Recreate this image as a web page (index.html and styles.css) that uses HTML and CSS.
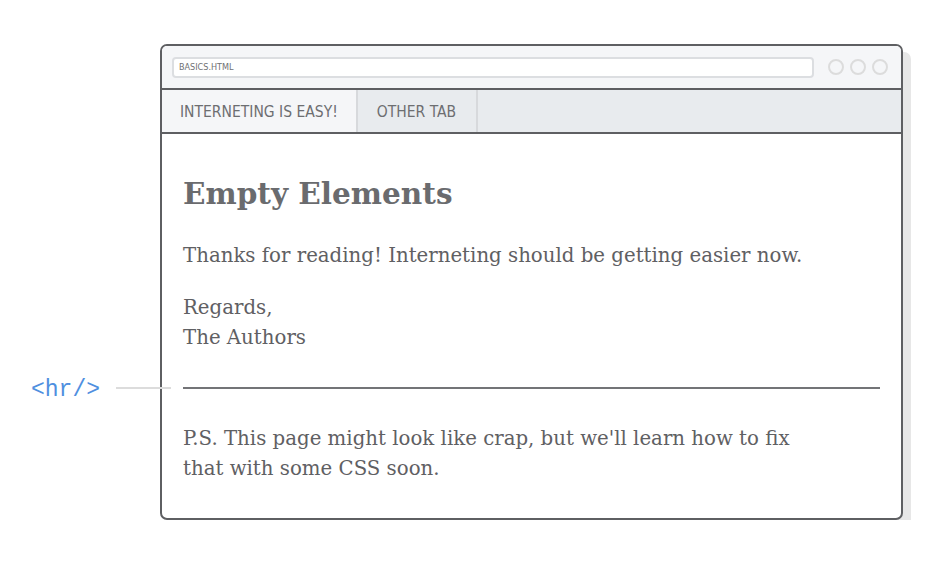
FILE: index.html
```html
<!DOCTYPE html>
<html lang="en">
<head>
<meta charset="utf-8">
<title>Empty Elements</title>
<link rel="stylesheet" href="styles.css">
</head>
<body>
<div class="stage">
  <div class="window">
    <div class="toolbar">
      <div class="address">basics.html</div>
      <div class="dots">
        <span class="dot"></span>
        <span class="dot"></span>
        <span class="dot"></span>
      </div>
    </div>
    <div class="tabs">
      <div class="tab active">Interneting is easy!</div>
      <div class="tab">Other tab</div>
    </div>
    <div class="content">
      <h1>Empty Elements</h1>
      <p>Thanks for reading! Interneting should be getting easier now.</p>
      <p>Regards,<br>The Authors</p>
      <div class="hr-wrap">
        <div class="annotation">
          <code>&lt;hr/&gt;</code>
          <span class="pointer"></span>
        </div>
        <hr>
      </div>
      <p class="ps">P.S. This page might look like crap, but we'll learn how to fix that with some CSS soon.</p>
    </div>
  </div>
</div>
</body>
</html>
```
FILE: styles.css
```css
html, body {
  margin: 0;
  padding: 0;
  background: #ffffff;
}

.stage {
  padding: 44px 0 0 160px;
}

.window {
  box-sizing: border-box;
  width: 743px;
  height: 476px;
  border: 2px solid #5e5f62;
  border-radius: 7px;
  background: #ffffff;
  box-shadow: 8px 8px 0 #e7e7e7;
}

.toolbar {
  height: 42px;
  background: #f5f6f8;
  border-bottom: 2px solid #5e5f62;
  border-radius: 5px 5px 0 0;
  display: flex;
  align-items: center;
  padding: 0 13px 0 10px;
  gap: 14px;
}

.address {
  flex: 1;
  box-sizing: border-box;
  height: 21px;
  background: #ffffff;
  border: 2px solid #dcdee1;
  border-radius: 4px;
  padding: 0 5px;
  display: flex;
  align-items: center;
  font-family: "DejaVu Sans", sans-serif;
  font-stretch: condensed;
  font-size: 9px;
  text-transform: uppercase;
  color: #6f7073;
}

.dots {
  display: flex;
  gap: 6px;
}

.dot {
  box-sizing: border-box;
  width: 16px;
  height: 16px;
  border: 2px solid #dcdcdc;
  border-radius: 50%;
}

.tabs {
  height: 42px;
  background: #e8ebee;
  border-bottom: 2px solid #5e5f62;
  display: flex;
}

.tab {
  display: flex;
  align-items: center;
  padding: 2px 20px 0 19px;
  border-right: 2px solid #d7d9dc;
  font-family: "DejaVu Sans", sans-serif;
  font-stretch: condensed;
  font-size: 15.5px;
  text-transform: uppercase;
  color: #6d6e71;
}

.tab.active {
  padding: 2px 18px 0 18px;
  background: #f5f6f8;
}

.content {
  padding: 41px 21px 0 21px;
  font-family: "DejaVu Serif", serif;
  color: #5f6063;
}

h1 {
  margin: 0 0 28px;
  font-size: 29.5px;
  line-height: 38px;
  font-weight: bold;
  color: #6a6b6e;
}

p {
  margin: 0 0 22px;
  font-size: 19.75px;
  line-height: 30px;
}

.hr-wrap {
  position: relative;
  margin: 34px 0 35px;
}

hr {
  margin: 0;
  border: 0;
  height: 2px;
  background: #737477;
}

.annotation {
  position: absolute;
  right: calc(100% + 12px);
  top: 50%;
  transform: translateY(-50%);
  display: flex;
  align-items: center;
  gap: 16px;
}

.annotation code {
  font-family: "Liberation Mono", monospace;
  font-size: 23px;
  line-height: 28px;
  padding-top: 4px;
  color: #4f8fdf;
  white-space: nowrap;
}

.pointer {
  width: 55px;
  height: 2px;
  background: #dcdcdc;
}

.ps {
  max-width: 640px;
}
```
